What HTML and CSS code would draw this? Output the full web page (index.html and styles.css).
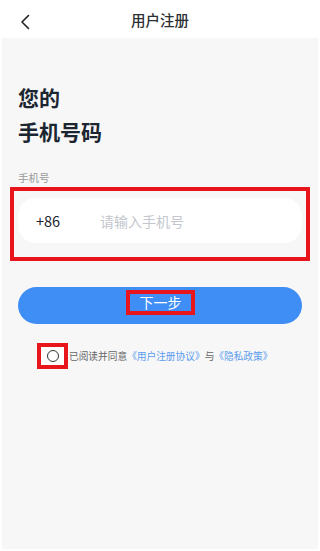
FILE: index.html
```html
<!DOCTYPE html>
<html lang="zh-CN">
<head>
    <meta charset="UTF-8">
    <meta name="viewport" content="width=device-width, initial-scale=1.0">
    <title>用户注册</title>
    <link rel="stylesheet" href="styles.css">
</head>
<body>

    <header class="top-bar">
        <a href="#" class="back-btn" aria-label="返回">
            <svg width="10" height="16" viewBox="0 0 10 16">
                <path d="M8.5 1.5 L2 8 L8.5 14.5" fill="none" stroke="#222" stroke-width="1.6" stroke-linecap="round" stroke-linejoin="round"/>
            </svg>
        </a>
        <h1>用户注册</h1>
    </header>

    <main class="content">
        <h2 class="title">您的<br>手机号码</h2>

        <div class="field-label">手机号</div>
        <div class="phone-field">
            <div class="phone-input">
                <span class="prefix">+86</span>
                <input type="tel" placeholder="请输入手机号">
            </div>
        </div>

        <button class="next-btn"><span>下一步</span></button>

        <!-- Accord des conditions -->
        <div class="agree">
            <span class="check-box"><span class="circle"></span></span>
            <span class="agree-text">已阅读并同意<a href="#">《用户注册协议》</a>与<a href="#">《隐私政策》</a></span>
        </div>
    </main>

</body>
</html>
```

FILE: styles.css
```css
body {
    font-family: "Noto Sans CJK SC", "Noto Sans", sans-serif;
    margin: 0;
    padding: 0;
    background-color: #ffffff;
    color: #333;
    display: flex;
    flex-direction: column;
    height: 551px;
    overflow: hidden;
}
.top-bar {
    height: 38px;
    display: flex;
    align-items: center;
    justify-content: center;
    position: relative;
    background-color: #ffffff;
}
.top-bar h1 {
    margin: 0;
    font-size: 14.5px;
    font-weight: 500;
    color: #2b2f33;
}
.back-btn {
    position: absolute;
    left: 20px;
    top: 14px;
    display: flex;
}
.content {
    flex: 1;
    margin: 0 2px 2px;
    background-color: #f7f7f7;
    padding: 42px 16px 0;
    display: flex;
    flex-direction: column;
}
.title {
    margin: 0;
    font-size: 21px;
    line-height: 34px;
    font-weight: bold;
    color: #1b2631;
}
.field-label {
    margin-top: 23px;
    font-size: 10.5px;
    line-height: 14px;
    color: #9a9a9a;
}
.phone-field {
    margin: 2px -8px 0;
    border: 4px solid #e8151d;
    padding: 7px 4px 14px;
}
.phone-input {
    height: 45px;
    background-color: #ffffff;
    border-radius: 18px;
    display: flex;
    align-items: center;
    padding-left: 18px;
}
.prefix {
    width: 64px;
    font-size: 14.5px;
    color: #1b2631;
}
.phone-input input {
    border: none;
    outline: none;
    background: transparent;
    font-family: inherit;
    font-size: 14px;
    color: #333;
    padding: 0;
    flex: 1;
}
.phone-input input::placeholder {
    color: #c3c6cc;
}
.next-btn {
    margin-top: 26px;
    height: 37px;
    border: none;
    border-radius: 19px;
    background-color: #3f8ef6;
    display: flex;
    align-items: center;
    justify-content: center;
    padding: 0 0 6px;
    font-family: inherit;
}
.next-btn span {
    border: 4px solid #e8151d;
    padding: 0 9px 0 10px;
    font-size: 14px;
    line-height: 17px;
    color: #ffffff;
}
.agree {
    margin: 19px 0 0 19px;
    display: flex;
    align-items: center;
}
.check-box {
    width: 23px;
    height: 18px;
    border: 4px solid #e8151d;
    background-color: #ffffff;
    display: flex;
    align-items: center;
    justify-content: center;
}
.circle {
    width: 10px;
    height: 10px;
    border: 1.3px solid #333;
    border-radius: 50%;
}
.agree-text {
    margin-left: 1px;
    font-size: 9.7px;
    color: #666;
    white-space: nowrap;
}
.agree-text a {
    color: #5b9cee;
    text-decoration: none;
}
```
